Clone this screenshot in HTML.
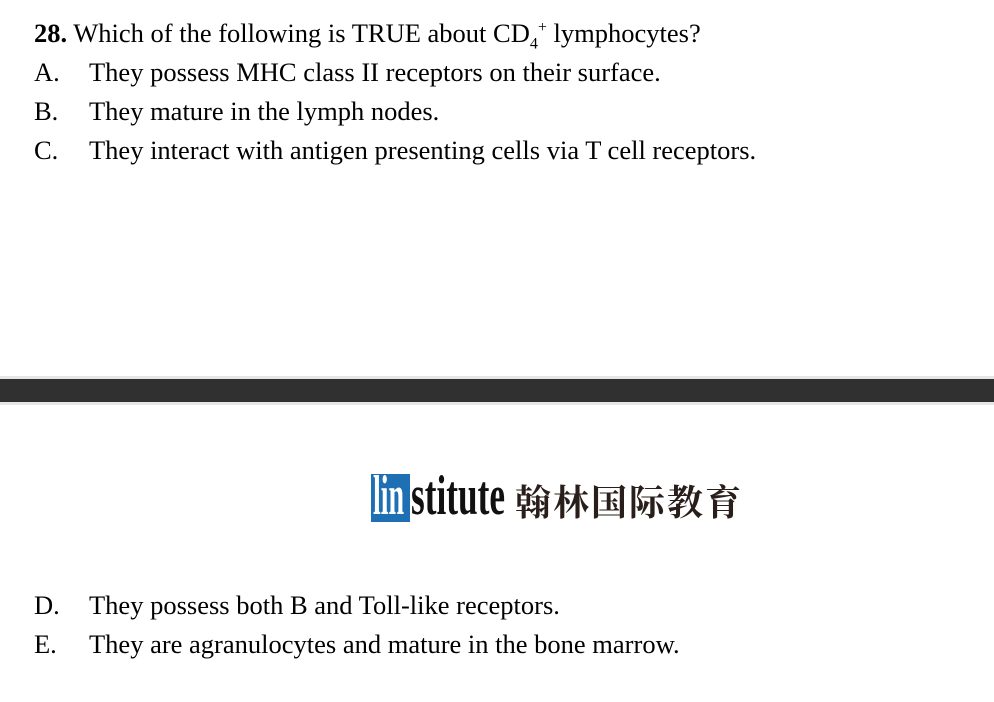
<!DOCTYPE html>
<html><head><style>
body{margin:0;width:994px;height:702px;background:#fff;position:relative;overflow:hidden;font-family:"Liberation Serif",serif;color:#000}
.l{position:absolute;left:34px;font-size:26.5px;line-height:30px;white-space:nowrap}
.l span.k{display:inline-block;width:55px}
.bar{position:absolute;left:0;top:376px;width:994px;height:29px;background:#e6e6e6}
.bar div{position:absolute;left:0;top:3px;width:994px;height:23px;background:#303030}
</style></head><body>
<div class="l" style="top:18px"><b>28.</b> Which of the following is TRUE about CD<sub style="font-size:16px;line-height:0">4</sub><sup style="font-size:16px;line-height:0">+</sup> lymphocytes?</div>
<div class="l" style="top:57px"><span class="k">A.</span>They possess MHC class II receptors on their surface.</div>
<div class="l" style="top:96px"><span class="k">B.</span>They mature in the lymph nodes.</div>
<div class="l" style="top:135px"><span class="k">C.</span>They interact with antigen presenting cells via T cell receptors.</div>
<div class="bar"><div></div></div>
<div style="position:absolute;left:371px;top:474px;width:39px;height:48px;background:#1f6fb5"></div>
<div style="position:absolute;left:373px;top:468px;font-size:56px;line-height:56px;color:#fff;transform:scaleX(0.5);transform-origin:left;font-family:'Liberation Serif',serif;font-weight:bold">lin</div>
<div style="position:absolute;left:411px;top:468px;font-size:56px;line-height:56px;color:#111;transform:scaleX(0.63);transform-origin:left;font-family:'Liberation Serif',serif;font-weight:bold">stitute</div>
<div style="position:absolute;left:515px;top:479px;font-size:36px;line-height:44px;letter-spacing:2px;color:#2a1e1a;font-family:'Noto Serif CJK SC','Noto Sans CJK SC',serif;font-weight:bold;white-space:nowrap">翰林国际教育</div>
<div class="l" style="top:590px"><span class="k">D.</span>They possess both B and Toll-like receptors.</div>
<div class="l" style="top:629px"><span class="k">E.</span>They are agranulocytes and mature in the bone marrow.</div>
</body></html>
